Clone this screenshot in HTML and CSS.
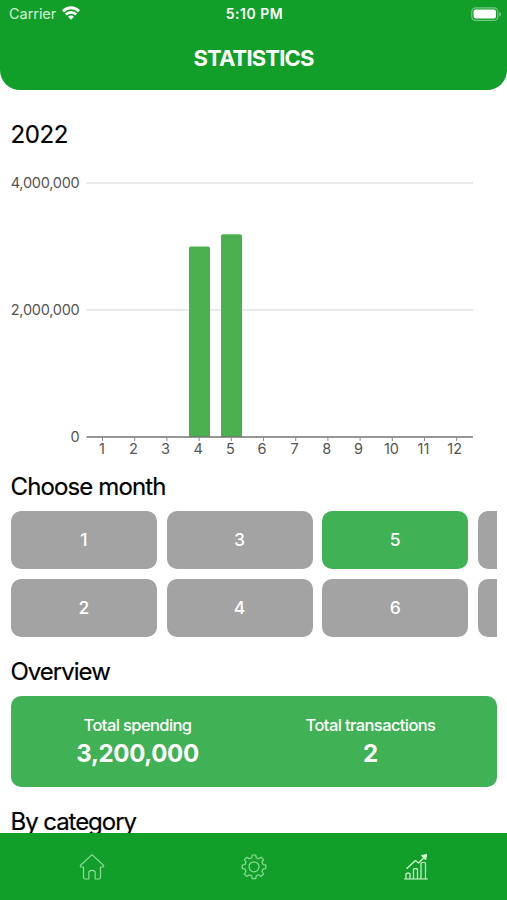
FILE: index.html
```html
<!DOCTYPE html>
<html lang="en">
<head>
<meta charset="utf-8">
<title>Statistics</title>
<link rel="stylesheet" href="styles.css">
</head>
<body>
<div class="app">
  <header class="header">
    <div class="status">
      <div class="carrier"><span>Carrier</span>
        <svg class="wifi" width="18" height="14" viewBox="0 0 18 14" fill="none" stroke="#fff" stroke-width="2.8"><path d="M1 5.2C5.6.6 12.4.6 17 5.2M3.800 8.500c2.900-2.900 7.500-2.900 10.400 0"/><path d="M6 10.700C7.800 9 10.200 9 12 10.700L9 13.800Z" fill="#fff" stroke="none"/></svg>
      </div>
      <div class="time">5:10 PM</div>
      <svg class="battery" width="31" height="14" viewBox="0 0 31 14"><rect x=".8" y=".8" width="26" height="12.6" rx="3.7" fill="none" stroke="#fff" stroke-opacity=".42" stroke-width="1.2"/><rect x="2.6" y="2.6" width="22.4" height="9" rx="2" fill="#fff"/><path d="M28.400 5c2.200.8 2.200 3.600 0 4.400Z" fill="#fff" fill-opacity=".5"/></svg>
    </div>
    <h1 class="title">STATISTICS</h1>
  </header>
  <main class="content">
    <h2 class="heading year">2022</h2>
    <svg class="chart" width="486" height="300" viewBox="11 165 486 300">
      <path class="gridline" d="M86.500 183H473M86.500 310H473"/>
      <path class="bar" d="M189 437V248.500q0-2 2-2h17q2 0 2 2V437ZM221 437V236.300q0-2 2-2h17q2 0 2 2V437Z"/>
      <path class="axis" d="M86.500 436.900H473"/>
      <path class="ticks" d="M102.500 437v4M134.700 437v4M166.900 437v4M199.100 437v4M231.300 437v4M263.500 437v4M295.700 437v4M327.900 437v4M360.100 437v4M392.300 437v4M424.500 437v4M456.700 437v4"/>
      <g class="ylabels"><text x="79.500" y="188">4,000,000</text><text x="79.500" y="315">2,000,000</text><text x="79.500" y="442">0</text></g>
      <g class="xlabels"><text x="102" y="454.300">1</text><text x="133.500" y="454.300">2</text><text x="165.500" y="454.300">3</text><text x="198.300" y="454.300">4</text><text x="230.300" y="454.300">5</text><text x="262" y="454.300">6</text><text x="294.500" y="454.300">7</text><text x="326.800" y="454.300">8</text><text x="358.500" y="454.300">9</text><text x="391.500" y="454.300">10</text><text x="423.500" y="454.300">11</text><text x="454.700" y="454.300">12</text></g>
    </svg>
    <h2 class="heading choose">Choose month</h2>
    <div class="months">
      <div class="month">1</div><div class="month">2</div>
      <div class="month">3</div><div class="month">4</div>
      <div class="month active">5</div><div class="month">6</div>
      <div class="month"></div><div class="month"></div>
    </div>
    <h2 class="heading overview">Overview</h2>
    <section class="summary">
      <div class="stat"><div class="label">Total spending</div><div class="value">3,200,000</div></div>
      <div class="stat"><div class="label">Total transactions</div><div class="value">2</div></div>
    </section>
    <h2 class="heading category">By category</h2>
  </main>
  <nav class="tabs">
    <svg width="26" height="28" viewBox="0 0 26 28"><path d="M13 1.600 1.600 12.300Q.700 14 2.500 14H4.500V24.500Q4.500 26 6 26H9.800V19.500Q9.800 17.300 13 17.300T16.200 19.500V26H20Q21.500 26 21.500 24.500V14H23.500Q25.300 14 24.400 12.300Z"/></svg>
    <svg width="26" height="28" viewBox="0 0 26 28"><path d="M10.700 4.800 11.300 2h3.400l.6 2.800 2.400 1 2.500-1.600 2.400 2.400-1.600 2.500 1 2.400 2.800.6v3.400l-2.800.6-1 2.400 1.600 2.500-2.400 2.400-2.500-1.600-2.400 1-.6 2.800h-3.400l-.6-2.800-2.400-1-2.500 1.600L3.400 21l1.600-2.500-1-2.400-2.800-.6v-3.400l2.800-.6 1-2.400L3.400 6.600l2.400-2.400 2.500 1.600Z"/><circle cx="13" cy="13.800" r="5"/></svg>
    <svg class="current" width="26" height="28" viewBox="0 0 26 28"><path d="M1.200 26H24.800M3 26V21.200q0-1 1-1h2q1 0 1 1V26M10.500 26V16.700q0-1 1-1h2q1 0 1 1V26M18 26V10.500q0-1 1-1h2.500q1 0 1 1V26M3.500 15.800 12.500 7.500 15.500 10 22.300 3.500"/><path class="tip" d="M18.800 2.500 23.500 1.500 22.700 6.500Z"/></svg>
  </nav>
</div>
</body>
</html>
```

FILE: styles.css
```css
* { box-sizing: border-box; }
body { margin: 0; background: #fff; font-family: Inter, "Liberation Sans", sans-serif; }
.app { width: 507px; height: 900px; display: flex; flex-direction: column; overflow: hidden; }
.header { height: 90px; flex: none; background: #129f29; color: #fff; border-radius: 0 0 20px 20px; }
.status { height: 27px; padding: 0 7px 0 9px; display: grid; grid-template-columns: 1fr auto 1fr; align-items: center; font-size: 14.5px; }
.carrier { display: flex; align-items: center; gap: 6px; color: #d3f0d7; letter-spacing: -.05px; }
.wifi { margin-top: -1px; }
.time { font-weight: 600; font-size: 14px; letter-spacing: .5px; }
.battery { justify-self: end; margin-right: -2px; }
.title { margin: 17px 0 0; text-align: center; font-size: 22px; line-height: 28px; font-weight: 700; letter-spacing: -.85px; }
.content { flex: 1; min-height: 0; overflow: hidden; padding: 0 10px 0 11px; }
.heading { margin: 0; font-size: 24px; line-height: 30px; font-weight: 400; color: #000; -webkit-text-stroke: .2px #000; text-indent: -.5px; }
.year { margin-top: 30px; letter-spacing: -.4px; }
.chart { display: block; margin-top: 15px; }
.gridline { stroke: #e2e2e2; stroke-width: 1.3; }
.bar { fill: #4caf50; }
.axis { stroke: #757575; stroke-width: 1.5; }
.ticks { stroke: #888; stroke-width: 1; }
.ylabels, .xlabels { fill: #555; font-size: 14.5px; }
.ylabels { text-anchor: end; letter-spacing: -.25px; }
.xlabels { text-anchor: middle; }
.choose { margin-top: 7px; letter-spacing: -.87px; }
.months { margin-top: 9px; display: grid; grid-auto-flow: column; grid-template-rows: 58px 58px; grid-auto-columns: 146px; gap: 10px 9.600px; overflow: hidden; }
.month { display: flex; align-items: center; justify-content: center; padding-bottom: 2px; border-radius: 10px; background: #a3a3a3; color: #fff; font-size: 17.500px; font-weight: 500; }
.active { background: #41b155; }
.overview { margin-top: 20px; letter-spacing: -1px; }
.summary { margin-top: 9px; height: 91px; border-radius: 10px; background: #41b155; color: #fff; display: flex; padding: 17px 10px 0; }
.stat { flex: 1; text-align: center; }
.label { font-size: 16.5px; line-height: 24px; font-weight: 500; letter-spacing: -.6px; }
.value { margin-top: 2px; font-size: 24px; line-height: 30px; font-weight: 700; letter-spacing: -.35px; }
.category { margin-top: 20px; letter-spacing: -1.05px; }
.tabs { height: 67px; flex: none; background: #129f29; padding: 0 10px 0 11px; display: grid; grid-template-columns: repeat(3, 1fr); justify-items: center; align-items: center; }
.tabs svg { fill: none; stroke: #8ddb97; stroke-width: 1.2; stroke-linejoin: round; }
.tabs .current { stroke: #d5f5d9; }
.tabs .tip { fill: #d5f5d9; }
```
